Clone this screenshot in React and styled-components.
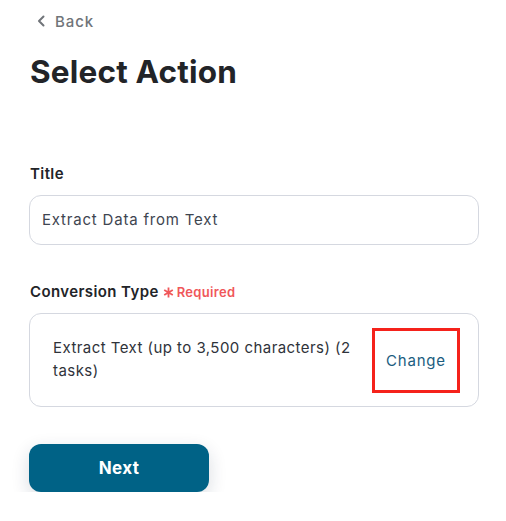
import styled, { createGlobalStyle } from "styled-components"

const Global = createGlobalStyle`
    body {
        margin: 0;
        background: #ffffff;
        font-family: Inter, "Noto Sans", sans-serif;
    }
`

const Page = styled.div`
    width: 506px;
    padding: 10px 27px 0 29px;
    box-sizing: border-box;
    color: #222428;
`

const BackLink = styled.a`
    display: flex;
    align-items: center;
    gap: 9px;
    margin-left: 8px;
    height: 22px;
    font-size: 15px;
    font-weight: 500;
    letter-spacing: 0.9px;
    color: #707479;
    cursor: pointer;
`

const Heading = styled.h1`
    margin: 21px 0 0 1px;
    font-size: 31.5px;
    line-height: 38px;
    font-weight: 700;
    letter-spacing: 0.2px;
`

const Field = styled.div`
    margin-top: ${p => p.top}px;
`

const Label = styled.div`
    display: flex;
    align-items: center;
    gap: 4px;
    font-size: 15px;
    font-weight: 600;
    line-height: 20px;
    letter-spacing: 0.4px;
    margin-left: 1px;
    margin-bottom: 11px;
`

const Required = styled.span`
    display: flex;
    align-items: center;
    gap: 3px;
    color: #f0575a;
    font-size: 13px;
    font-weight: 600;
    letter-spacing: 0.3px;
`

const Input = styled.div`
    height: 50px;
    border: 1px solid #d5d8e0;
    border-radius: 12px;
    box-sizing: border-box;
    display: flex;
    align-items: center;
    padding: 0 0 2px 12px;
    font-size: 15px;
    letter-spacing: 0.8px;
    color: #3e4550;
`

const Card = styled.div`
    height: 94px;
    border: 1px solid #d5d8e0;
    border-radius: 12px;
    box-sizing: border-box;
    display: flex;
    align-items: center;
    padding: 0 18px 0 23px;
    gap: 8px;
`

const CardText = styled.div`
    flex: 1;
    font-size: 15px;
    line-height: 23px;
    letter-spacing: 0.45px;
    color: #2f333a;
    margin-top: -2px;
`

const ChangeBox = styled.div`
    width: 88px;
    height: 65px;
    border: 3px solid #f5221b;
    box-sizing: border-box;
    display: flex;
    align-items: center;
    justify-content: center;
    font-size: 15px;
    letter-spacing: 0.8px;
    color: #1b5d80;
`

const NextButton = styled.button`
    margin-top: 37px;
    width: 180px;
    height: 48px;
    border: none;
    border-radius: 12px;
    background: #006286;
    color: #ffffff;
    font-family: Inter, sans-serif;
    font-size: 17px;
    font-weight: 700;
    letter-spacing: 0.4px;
    box-shadow: 0 6px 18px rgba(20, 40, 70, 0.16);
    cursor: pointer;
`

const Chevron = () => (
    <svg width="9" height="12" viewBox="0 0 9 12" fill="none">
        <path d="M6.5 1.5L2 6l4.5 4.5" stroke="#707479" strokeWidth="2" strokeLinecap="round" strokeLinejoin="round" />
    </svg>
)

const Asterisk = () => (
    <svg width="11" height="11" viewBox="0 0 11 11" fill="none">
        <path d="M5.5 0.5v10M1.2 3l8.6 5M1.2 8l8.6-5" stroke="#f0575a" strokeWidth="1.8" />
    </svg>
)

export default function App() {
    return (
        <Page>
            <Global />
            <BackLink><Chevron />Back</BackLink>
            <Heading>Select Action</Heading>
            <Field top={73}>
                <Label>Title</Label>
                <Input>Extract Data from Text</Input>
            </Field>
            <Field top={37}>
                <Label>Conversion Type <Required><Asterisk />Required</Required></Label>
                <Card>
                    <CardText>Extract Text (up to 3,500 characters) (2 tasks)</CardText>
                    <ChangeBox>Change</ChangeBox>
                </Card>
            </Field>
            <NextButton>Next</NextButton>
        </Page>
    )
}
